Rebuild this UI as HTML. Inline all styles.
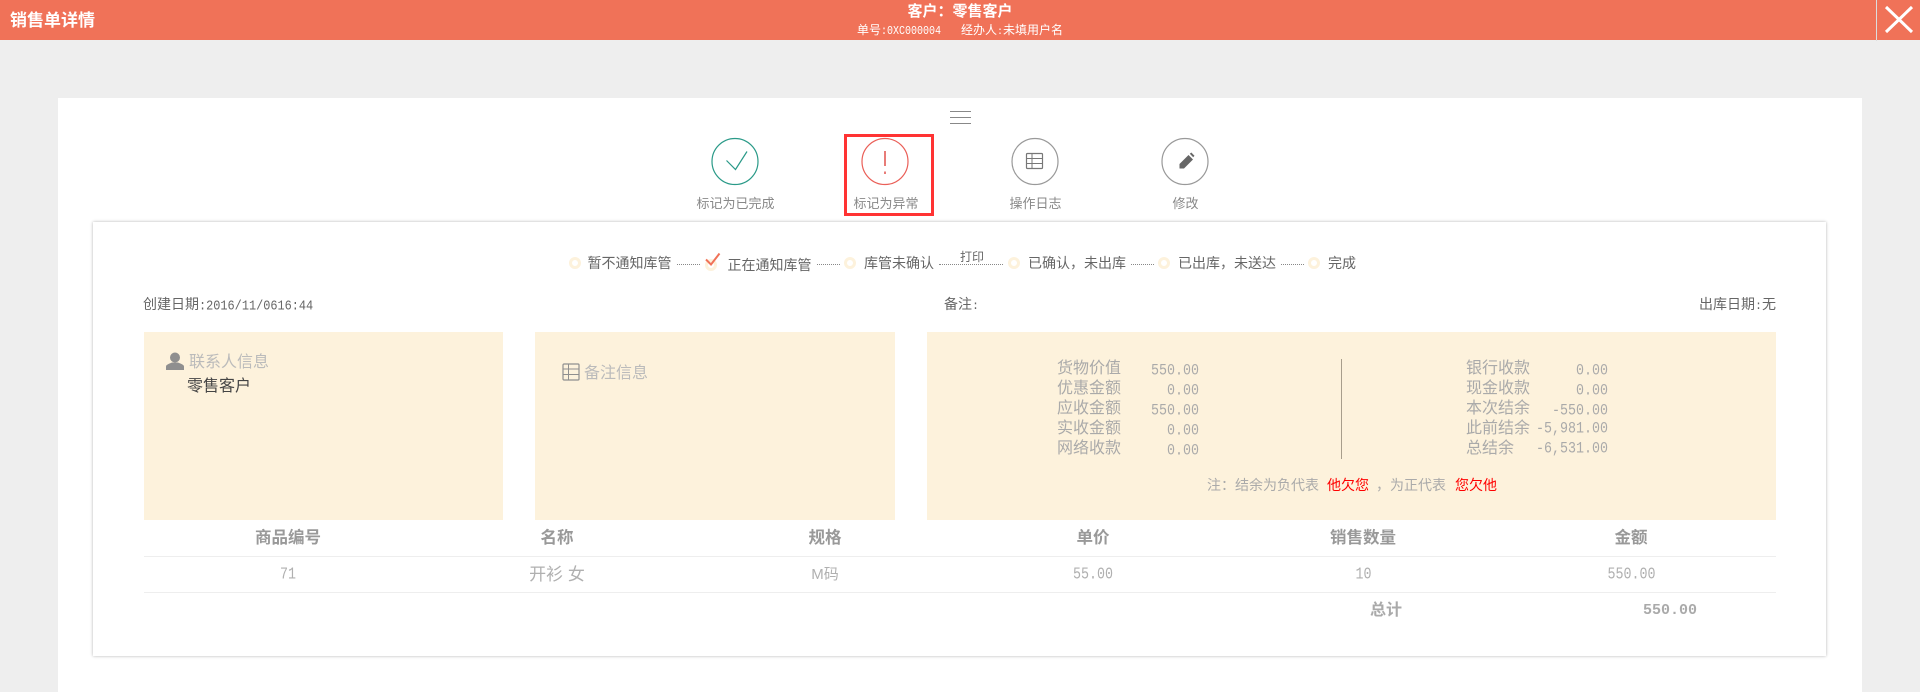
<!DOCTYPE html>
<html lang="zh-CN">
<head>
<meta charset="utf-8">
<title>销售单详情</title>
<style>
html,body{margin:0;padding:0;width:1920px;height:692px;overflow:hidden;background:#eee;}
body{position:relative;font-family:"Liberation Sans","Noto Sans CJK SC",sans-serif;}
div{position:absolute;}
.t{white-space:nowrap;line-height:20px;height:20px;font-size:14px;}
.c{transform:translateX(-50%);text-align:center;}
.r{transform:translateX(-100%);text-align:right;}
.m{font-family:"Liberation Mono","Noto Sans CJK SC",monospace;}
.tall{display:inline-block;transform:scaleY(1.18);}
.lbl{font-size:13px;color:#888;}
.step{font-size:14px;color:#666;}
.dot{width:6px;height:6px;border:3px solid #fdf2dc;border-radius:50%;background:#fff;}
.dash{height:0;border-top:1px dotted #888;width:23px;top:264px;}
.panel{background:#fdf2dc;top:332px;height:188px;}
.k{font-size:16px;color:#aaa;}
.v{font-size:13.33px;color:#aaa;transform:translateX(-100%) scaleY(1.18);}
.th{font-size:16.5px;font-weight:bold;color:#999;}
.td{font-size:14px;color:#b0b0b0;}
.dg{font-size:13.33px;transform:translateX(-50%) scaleY(1.25);}
.line{left:144px;width:1632px;height:1px;background:#eee;}
.red{color:#f00;font-size:14px;}
</style>
</head>
<body>
<div style="left:0;top:0;width:1920px;height:40px;background:#f07258;"></div>
<div class="t" style="left:10px;top:11px;font-size:17px;font-weight:bold;color:#fff;">销售单详情</div>
<div class="t c" style="left:960px;top:2px;font-size:15px;font-weight:bold;color:#fff;">客户：零售客户</div>
<div class="t" style="left:857px;top:20px;font-size:12px;color:#fff;">单号<span class="m tall" style="font-size:10px;">:0XC000004</span></div>
<div class="t" style="left:961px;top:20px;font-size:12px;color:#fff;">经办人<span class="m" style="font-size:10px;">:</span>未填用户名</div>
<div style="left:1876px;top:0;width:1px;height:41px;background:#ddd;"></div>
<svg style="position:absolute;left:1880px;top:0;" width="40" height="40"><path d="M6 7L32 32M32 7L6 32" stroke="#fff" stroke-width="3" fill="none"/></svg>

<div style="left:58px;top:98px;width:1804px;height:594px;background:#fff;"></div>

<svg style="position:absolute;left:700px;top:105px;" width="540" height="90" fill="none">
  <path d="M250 6.5H271M250 12.5H271M250 18.5H271" stroke="#888" stroke-width="1"/>
  <circle cx="35" cy="56.5" r="23" stroke="#2a9a88" stroke-width="1.2"/>
  <path d="M26.5 55.5L35.5 64.5L47 46.5" stroke="#2a9a88" stroke-width="1.2"/>
  <circle cx="185" cy="56.5" r="23" stroke="#ea5f58" stroke-width="1.2"/>
  <path d="M185 46V61" stroke="#e0504a" stroke-width="1.5"/>
  <path d="M185 66.5V69" stroke="#e0504a" stroke-width="1.5"/>
  <circle cx="335" cy="56.5" r="23" stroke="#999" stroke-width="1.2"/>
  <rect x="326.5" y="48.5" width="16" height="15" rx="1" stroke="#777" stroke-width="1.2"/>
  <path d="M327 53.5H342M327 58.5H342M332 49V63" stroke="#777" stroke-width="1"/>
  <circle cx="485" cy="56.5" r="23" stroke="#999" stroke-width="1.2"/>
  <path d="M479.5 63.5L479.5 59L488.5 50L493 54.5L484 63.5Z" fill="#666"/>
  <path d="M489.8 48.8L491.3 47.5L494.5 50.7L493.2 52.2Z" fill="#666"/>
</svg>
<div style="left:844px;top:134px;width:84px;height:76px;border:3px solid #f33;"></div>
<div class="t lbl c" style="left:735.5px;top:194px;">标记为已完成</div>
<div class="t lbl c" style="left:886px;top:194px;">标记为异常</div>
<div class="t lbl c" style="left:1035.5px;top:194px;">操作日志</div>
<div class="t lbl c" style="left:1185.5px;top:194px;">修改</div>

<div style="left:93px;top:222px;width:1733px;height:434px;background:#fff;box-shadow:0 0 3px rgba(0,0,0,.3);"></div>

<div class="dot" style="left:569px;top:257px;"></div>
<div class="t step" style="left:587.5px;top:253px;">暂不通知库管</div>
<div class="dash" style="left:677px;"></div>
<div class="dot" style="left:705px;top:259px;"></div>
<svg style="position:absolute;left:704px;top:251px;" width="18" height="17" fill="none"><path d="M2 8.5L7 13.5L15.5 2.5" stroke="#f07258" stroke-width="2"/></svg>
<div class="t step" style="left:727.5px;top:255px;">正在通知库管</div>
<div class="dash" style="left:817px;"></div>
<div class="dot" style="left:844px;top:257px;"></div>
<div class="t step" style="left:864px;top:253px;">库管未确认</div>
<div class="dash" style="left:939px;width:64px;"></div>
<div class="t c" style="left:972px;top:247px;font-size:12px;color:#666;">打印</div>
<div class="dot" style="left:1008px;top:257px;"></div>
<div class="t step" style="left:1028px;top:253px;">已确认，未出库</div>
<div class="dash" style="left:1131px;"></div>
<div class="dot" style="left:1158px;top:257px;"></div>
<div class="t step" style="left:1178px;top:253px;">已出库，未送达</div>
<div class="dash" style="left:1281px;"></div>
<div class="dot" style="left:1308px;top:257px;"></div>
<div class="t step" style="left:1328px;top:253px;">完成</div>

<div class="t" style="left:143px;top:294px;color:#666;font-size:14px;">创建日期<span class="m tall" style="font-size:11.9px;">:2016/11/0616:44</span></div>
<div class="t" style="left:944px;top:294px;color:#666;">备注<span class="m" style="font-size:11.67px;">:</span></div>
<div class="t r" style="left:1776px;top:294px;color:#666;">出库日期<span class="m" style="font-size:11.67px;">:</span>无</div>

<div class="panel" style="left:144px;width:359px;"></div>
<div class="panel" style="left:535px;width:360px;"></div>
<div class="panel" style="left:927px;width:849px;"></div>

<svg style="position:absolute;left:166px;top:352px;" width="18" height="18"><circle cx="9" cy="5.5" r="5" fill="#8f8f8f"/><path d="M0 18V14.5C0 12.5 4 11.5 6 10.5H12C14 11.5 18 12.5 18 14.5V18Z" fill="#8f8f8f"/></svg>
<div class="t k" style="left:189px;top:353px;color:#bbb;">联系人信息</div>
<div class="t" style="left:187px;top:377px;font-size:16px;color:#444;">零售客户</div>
<svg style="position:absolute;left:562px;top:363px;" width="18" height="18" fill="none"><rect x="1" y="1" width="16" height="16" rx="1" stroke="#8f8f8f" stroke-width="1.2"/><path d="M1 6H17M1 11.5H17M6.5 1V17" stroke="#8f8f8f"/></svg>
<div class="t k" style="left:584px;top:364px;color:#bbb;">备注信息</div>

<div class="t k" style="left:1057px;top:359px;">货物价值</div>
<div class="t k" style="left:1057px;top:379px;">优惠金额</div>
<div class="t k" style="left:1057px;top:399px;">应收金额</div>
<div class="t k" style="left:1057px;top:419px;">实收金额</div>
<div class="t k" style="left:1057px;top:439px;">网络收款</div>
<div class="t v m" style="left:1199px;top:362px;">550.00</div>
<div class="t v m" style="left:1199px;top:382px;">0.00</div>
<div class="t v m" style="left:1199px;top:402px;">550.00</div>
<div class="t v m" style="left:1199px;top:422px;">0.00</div>
<div class="t v m" style="left:1199px;top:442px;">0.00</div>

<div style="left:1341px;top:359px;width:1px;height:100px;background:#a89e8c;"></div>

<div class="t k" style="left:1466px;top:359px;">银行收款</div>
<div class="t k" style="left:1466px;top:379px;">现金收款</div>
<div class="t k" style="left:1466px;top:399px;">本次结余</div>
<div class="t k" style="left:1466px;top:419px;">此前结余</div>
<div class="t k" style="left:1466px;top:439px;">总结余</div>
<div class="t v m" style="left:1608px;top:362px;">0.00</div>
<div class="t v m" style="left:1608px;top:382px;">0.00</div>
<div class="t v m" style="left:1608px;top:402px;">-550.00</div>
<div class="t v m" style="left:1608px;top:420px;">-5,981.00</div>
<div class="t v m" style="left:1608px;top:440px;">-6,531.00</div>

<div class="t" style="left:1207px;top:475px;color:#aaa;">注：结余为负代表</div>
<div class="t red" style="left:1327px;top:475px;">他欠您</div>
<div class="t" style="left:1376px;top:475px;color:#aaa;">，为正代表</div>
<div class="t red" style="left:1455px;top:475px;">您欠他</div>

<div class="t th c" style="left:288px;top:528px;">商品编号</div>
<div class="t th c" style="left:557px;top:528px;">名称</div>
<div class="t th c" style="left:825px;top:528px;">规格</div>
<div class="t th c" style="left:1093px;top:528px;">单价</div>
<div class="t th c" style="left:1363px;top:528px;">销售数量</div>
<div class="t th c" style="left:1631px;top:528px;">金额</div>
<div class="line" style="top:556px;"></div>

<div class="t td m dg" style="left:288px;top:566px;">71</div>
<div class="t td c" style="left:557px;top:565px;font-size:17px;">开衫 女</div>
<div class="t td c" style="left:825px;top:565px;font-size:15px;">M码</div>
<div class="t td m dg" style="left:1093px;top:566px;">55.00</div>
<div class="t td m dg" style="left:1363.5px;top:566px;">10</div>
<div class="t td m dg" style="left:1631.5px;top:566px;">550.00</div>
<div class="line" style="top:592px;"></div>

<div class="t c" style="left:1386px;top:601px;font-size:16px;font-weight:bold;color:#aaa;">总计</div>
<div class="t m r" style="left:1697px;top:601px;font-size:15px;font-weight:bold;color:#aaa;">550.00</div>
</body>
</html>
